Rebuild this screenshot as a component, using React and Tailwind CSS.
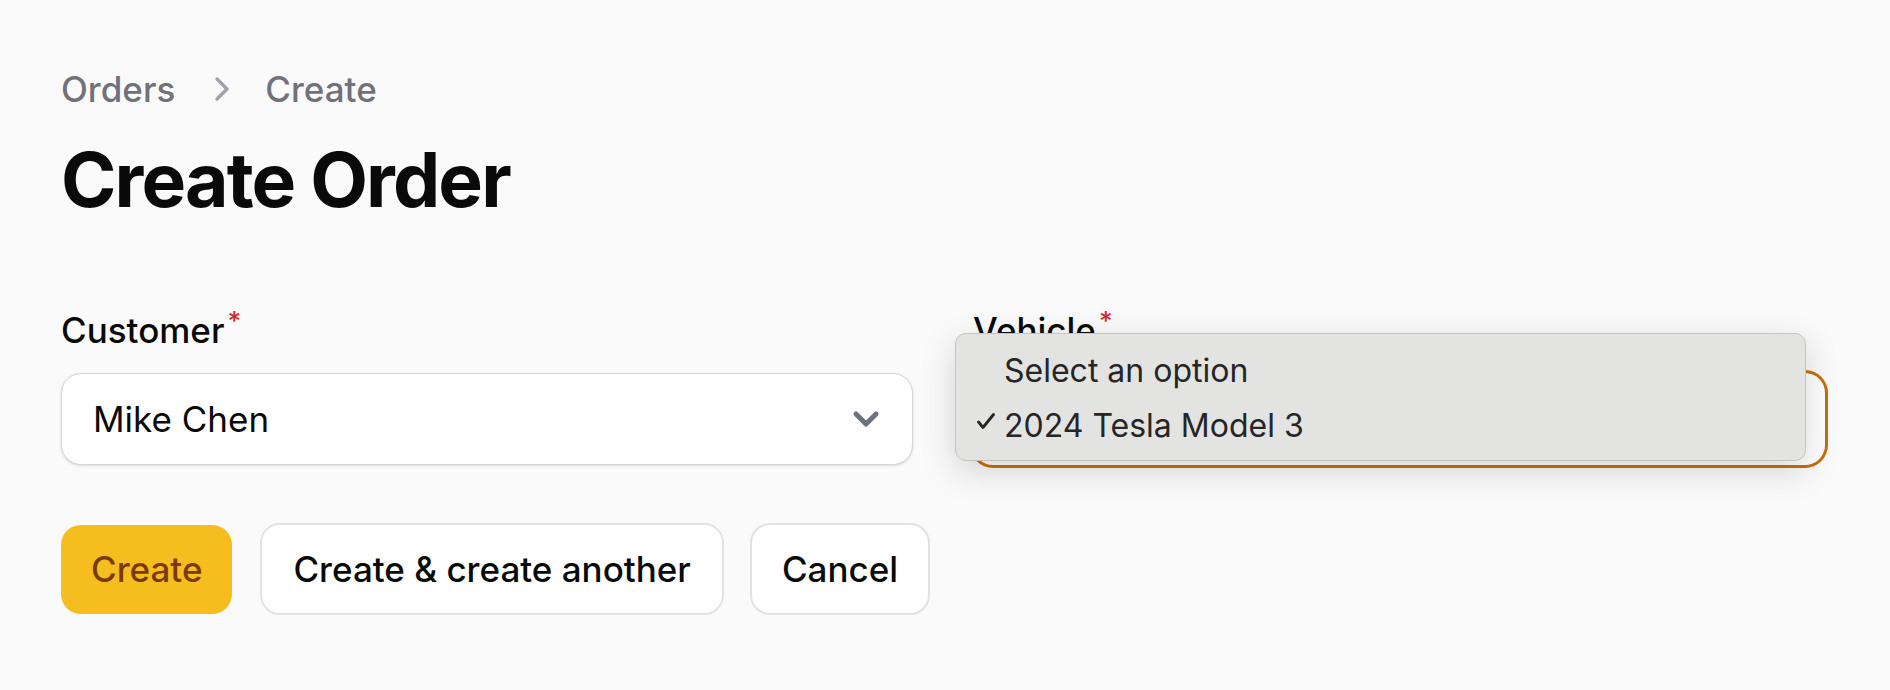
import React from 'react'
import { ChevronRight, ChevronDown } from 'lucide-react'

const Label = ({ children }) => (
  <div className="h-[48px] text-[35px] leading-[48px] font-medium text-[#0a0a0a]">
    {children}
    <sup className="ml-[3px] font-medium text-[#dc2626]">*</sup>
  </div>
)

const VehicleMenu = () => (
  <div className="absolute left-[-18px] top-[27px] z-10 w-[851px] h-[128px] rounded-[11px] border border-[#c4c4c4] bg-[#e3e3e2] py-[9px] shadow-[0_10px_35px_rgba(0,0,0,0.16)] text-[32px] text-[#262626]">
    <div className="flex h-[55px] items-center pl-[48px]">Select an option</div>
    <div className="relative flex h-[55px] items-center pl-[48px]">
      <svg width="18" height="16" viewBox="0 0 18 16" className="absolute left-[21px] top-[15px]" fill="none" stroke="#262626" strokeWidth="2.8" strokeLinecap="round" strokeLinejoin="round">
        <path d="M1.5 9 L6 14.5 L16.5 1.5" />
      </svg>
      2024 Tesla Model 3
    </div>
  </div>
)

const App = () => {
  return (
    <div className="min-h-screen bg-[#fafafa] font-['Inter','Noto_Sans',sans-serif]">
      <div className="pl-[61px] pr-[65px] pt-[65px]">
        <nav className="flex h-[48px] items-center text-[35px] leading-[48px] font-medium text-[#71717a]">
          <span>Orders</span>
          <ChevronRight size={40} strokeWidth={2} className="ml-[27px] mr-[23px] text-[#a1a1aa]" />
          <span>Create</span>
        </nav>
        <h1 className="mt-[22px] text-[75px] leading-[1.2] font-bold tracking-tight text-[#0a0a0a]">Create Order</h1>

        <div className="mt-[81px] grid grid-cols-2 gap-x-[60px]">
          <div>
            <Label>Customer</Label>
            <div className="mt-[19px] flex h-[92px] items-center justify-between rounded-[20px] border border-[#d4d4d4] bg-white pl-[31px] pr-[26px] shadow-sm">
              <span className="text-[35px] text-[#0a0a0a]">Mike Chen</span>
              <ChevronDown size={40} strokeWidth={3} className="text-[#6b7280]" />
            </div>
          </div>
          <div className="relative">
            <Label>Vehicle</Label>
            <div className="mt-[19px] flex h-[92px] items-center justify-between rounded-[20px] bg-white pl-[31px] pr-[26px] ring-[3px] ring-[#c76f0b]">
              <span className="text-[35px] text-[#0a0a0a]">2024 Tesla Model 3</span>
              <ChevronDown size={40} strokeWidth={3} className="text-[#6b7280]" />
            </div>
            <VehicleMenu />
          </div>
        </div>

        <div className="mt-[58px] flex items-center text-[35px] font-medium">
          <button className="h-[89px] rounded-[20px] bg-[#f5be1e] px-[30px] text-[#7a3a0e]">Create</button>
          <button className="ml-[28px] h-[92px] rounded-[20px] border-2 border-[#e2e2e2] bg-white px-[31px] text-[#0a0a0a]">Create &amp; create another</button>
          <button className="ml-[26px] h-[92px] rounded-[20px] border-2 border-[#e2e2e2] bg-white px-[30px] text-[#0a0a0a]">Cancel</button>
        </div>
      </div>
    </div>
  )
}

export default App
